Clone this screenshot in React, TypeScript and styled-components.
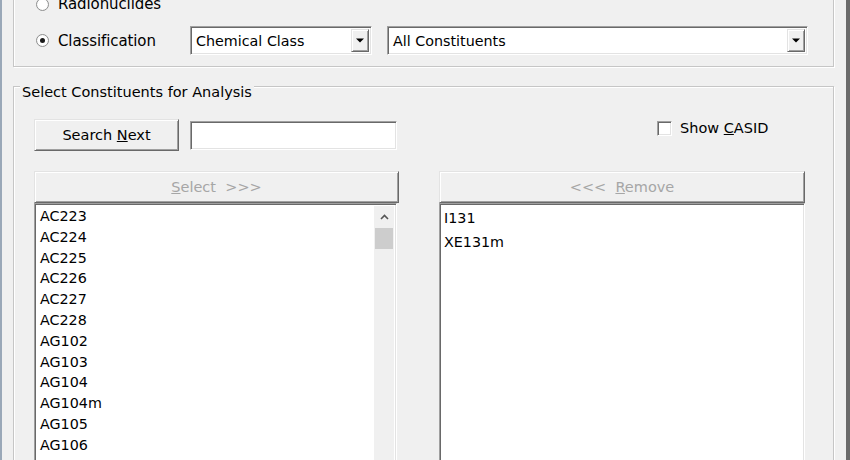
import React from "react";
import styled, { createGlobalStyle } from "styled-components";

const GlobalStyle = createGlobalStyle`
  html, body {
    margin: 0;
    padding: 0;
    background: #f0f0f0;
  }
  body {
    font-family: "DejaVu Sans", "Liberation Sans", sans-serif;
    color: #000;
  }
`;

const leftItems = [
  "AC223",
  "AC224",
  "AC225",
  "AC226",
  "AC227",
  "AC228",
  "AG102",
  "AG103",
  "AG104",
  "AG104m",
  "AG105",
  "AG106",
  "AG106m",
  "AG108",
];

const chosenItems = ["I131", "XE131m"];

const ArrowDown = () => (
  <svg width="8" height="5" viewBox="0 0 8 5">
    <path d="M0 0.5h8L4 4.5z" fill="#000" />
  </svg>
);

const App = () => {
  return (
    <>
      <GlobalStyle />
      <Window>
        <TopGroup>
          <OptionRow>
            <RadioOption>
              <Radio />
              <RadioLabel>Radionuclides</RadioLabel>
            </RadioOption>
          </OptionRow>
          <OptionRow>
            <RadioOption>
              <Radio $checked />
              <RadioLabel>Classification</RadioLabel>
            </RadioOption>
            <Combo $width={182}>
              <ComboText>Chemical Class</ComboText>
              <ComboArrow>
                <ArrowDown />
              </ComboArrow>
            </Combo>
            <Combo $grow>
              <ComboText>All Constituents</ComboText>
              <ComboArrow>
                <ArrowDown />
              </ComboArrow>
            </Combo>
          </OptionRow>
        </TopGroup>

        <SelectGroup>
          <Caption>Select Constituents for Analysis</Caption>
          <SearchRow>
            <Button $width={145}>
              <span>
                Search <u>N</u>ext
              </span>
            </Button>
            <TextBox />
            <CheckOption>
              <CheckBox />
              <span>
                Show <u>C</u>ASID
              </span>
            </CheckOption>
          </SearchRow>

          <ListsRow>
            <ListColumn>
              <Button $disabled>
                <span>
                  <u>S</u>elect&nbsp;&nbsp;&gt;&gt;&gt;
                </span>
              </Button>
              <ListBox $width={363}>
                <Items $rowHeight={20.8}>
                  {leftItems.map((item) => (
                    <Item key={item}>{item}</Item>
                  ))}
                </Items>
                <ScrollBar>
                  <ScrollArrow>
                    <svg width="9" height="6" viewBox="0 0 9 6">
                      <path
                        d="M1 5L4.5 1.5L8 5"
                        fill="none"
                        stroke="#555"
                        strokeWidth="1.6"
                      />
                    </svg>
                  </ScrollArrow>
                  <ScrollThumb />
                </ScrollBar>
              </ListBox>
            </ListColumn>
            <ListColumn>
              <Button $disabled>
                <span>
                  &lt;&lt;&lt;&nbsp;&nbsp;<u>R</u>emove
                </span>
              </Button>
              <ListBox>
                <Items $rowHeight={24} $padLeft={2}>
                  {chosenItems.map((item) => (
                    <Item key={item}>{item}</Item>
                  ))}
                </Items>
              </ListBox>
            </ListColumn>
          </ListsRow>
        </SelectGroup>
      </Window>
    </>
  );
};

export default App;

const raised = `
  border: 1px solid;
  border-color: #e3e3e3 #696969 #696969 #e3e3e3;
  box-shadow: inset 1px 1px 0 #fff, inset -1px -1px 0 #a0a0a0;
  background: #f0f0f0;
`;

const sunken = `
  border: 1px solid;
  border-color: #a0a0a0 #fff #fff #a0a0a0;
  box-shadow: inset 1px 1px 0 #696969, inset -1px -1px 0 #e3e3e3;
  background: #fff;
`;

const Window = styled.div`
  width: 850px;
  height: 460px;
  box-sizing: border-box;
  overflow: hidden;
  background: #f0f0f0;
  border-left: 2px solid #9aa8b8;
  border-right: 4px solid #6b6b6b;
  padding: 0 12px 0 11px;
  display: flex;
  flex-direction: column;
`;

const TopGroup = styled.div`
  margin-top: -28px;
  border: 1px solid #c6c6c6;
  box-shadow: 1px 1px 0 #fff, inset 1px 1px 0 #fff;
  padding: 20px 25px 11px 22px;
  display: flex;
  flex-direction: column;
  gap: 11px;
`;

const OptionRow = styled.div`
  display: flex;
  align-items: center;
  min-height: 22px;
`;

const RadioOption = styled.label`
  width: 154px;
  flex: none;
  display: flex;
  align-items: center;
  gap: 9px;
`;

const Radio = styled.span<{ $checked?: boolean }>`
  width: 13px;
  height: 13px;
  box-sizing: border-box;
  border-radius: 50%;
  border: 1px solid #8e8f8f;
  background: radial-gradient(circle, #fff 55%, #e6e6e6 100%);
  display: flex;
  align-items: center;
  justify-content: center;
  &::after {
    content: "";
    display: ${(p) => (p.$checked ? "block" : "none")};
    width: 5px;
    height: 5px;
    border-radius: 50%;
    background: #1a1a1a;
  }
`;

const RadioLabel = styled.span`
  font-size: 15px;
  line-height: 18px;
  letter-spacing: -0.1px;
`;

const Combo = styled.div<{ $width?: number; $grow?: boolean }>`
  ${sunken}
  box-sizing: border-box;
  height: 29px;
  padding: 2px;
  width: ${(p) => (p.$width ? `${p.$width}px` : "auto")};
  flex: ${(p) => (p.$grow ? "1" : "none")};
  margin-left: ${(p) => (p.$grow ? "15px" : "0")};
  display: flex;
  align-items: stretch;
`;

const ComboText = styled.span`
  flex: 1;
  padding-left: 3px;
  font-size: 14.3px;
  line-height: 25px;
  white-space: nowrap;
`;

const ComboArrow = styled.span`
  ${raised}
  box-sizing: border-box;
  width: 18px;
  display: flex;
  align-items: center;
  justify-content: center;
`;

const SelectGroup = styled.div`
  margin-top: 19px;
  border: 1px solid #c6c6c6;
  box-shadow: 1px 1px 0 #fff, inset 1px 1px 0 #fff;
  padding: 0 28px 0 20px;
  display: flex;
  flex-direction: column;
  flex: none;
  height: 420px;
`;

const Caption = styled.span`
  align-self: flex-start;
  margin: -3px 0 0 -14px;
  padding: 0 2px;
  background: #f0f0f0;
  font-size: 14.5px;
  line-height: 17px;
  white-space: nowrap;
`;

const SearchRow = styled.div`
  margin-top: 18px;
  height: 32px;
  display: flex;
  align-items: center;
`;

const Button = styled.div<{ $width?: number; $disabled?: boolean }>`
  ${raised}
  box-sizing: border-box;
  height: 32px;
  width: ${(p) => (p.$width ? `${p.$width}px` : "100%")};
  flex: none;
  display: flex;
  align-items: center;
  justify-content: center;
  font-size: 14.5px;
  color: ${(p) => (p.$disabled ? "#a6a6a6" : "#000")};
  white-space: nowrap;
`;

const TextBox = styled.div`
  ${sunken}
  box-sizing: border-box;
  width: 207px;
  height: 29px;
  margin-left: 11px;
`;

const CheckOption = styled.label`
  align-self: flex-start;
  margin: 2px 0 0 260px;
  height: 15px;
  display: flex;
  align-items: center;
  gap: 8px;
  font-size: 14.5px;
  line-height: 15px;
  white-space: nowrap;
`;

const CheckBox = styled.span`
  width: 15px;
  height: 15px;
  box-sizing: border-box;
  ${sunken}
`;

const ListsRow = styled.div`
  margin-top: 20px;
  display: grid;
  grid-template-columns: 365px 366px;
  column-gap: 40px;
  flex: 1;
  min-height: 0;
`;

const ListColumn = styled.div`
  display: flex;
  flex-direction: column;
`;

const ListBox = styled.div<{ $width?: number }>`
  ${sunken}
  box-sizing: border-box;
  width: ${(p) => (p.$width ? `${p.$width}px` : "100%")};
  flex: 1;
  padding: 2px;
  display: flex;
  overflow: hidden;
`;

const Items = styled.div<{ $rowHeight: number; $padLeft?: number }>`
  flex: 1;
  padding-left: ${(p) => p.$padLeft ?? 3}px;
  font-size: 14.3px;
  line-height: ${(p) => p.$rowHeight}px;
`;

const Item = styled.div`
  white-space: nowrap;
`;

const ScrollBar = styled.div`
  width: 20px;
  flex: none;
  background: #f0f0f0;
  display: flex;
  flex-direction: column;
  align-items: center;
`;

const ScrollArrow = styled.div`
  height: 21px;
  width: 100%;
  display: flex;
  align-items: center;
  justify-content: center;
`;

const ScrollThumb = styled.div`
  margin-top: 1px;
  width: 18px;
  height: 21px;
  background: #cdcdcd;
`;
